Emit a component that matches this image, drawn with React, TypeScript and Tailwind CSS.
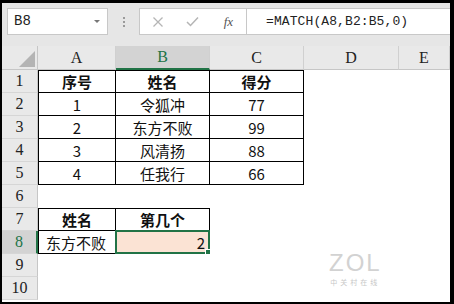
import React from 'react'

const cjk = "font-['Noto_Sans_CJK_SC',sans-serif]"
const serif = "font-['Liberation_Serif','Noto_Sans_CJK_SC',serif]"

type Cell = { text?: string; bold?: boolean; align?: 'left' | 'center' | 'right'; boxed?: boolean; selected?: boolean }

const rows: Cell[][] = [
  [{ text: '序号', bold: true, boxed: true }, { text: '姓名', bold: true, boxed: true }, { text: '得分', bold: true, boxed: true }, {}, {}],
  [{ text: '1', boxed: true }, { text: '令狐冲', boxed: true }, { text: '77', boxed: true }, {}, {}],
  [{ text: '2', boxed: true }, { text: '东方不败', boxed: true }, { text: '99', boxed: true }, {}, {}],
  [{ text: '3', boxed: true }, { text: '风清扬', boxed: true }, { text: '88', boxed: true }, {}, {}],
  [{ text: '4', boxed: true }, { text: '任我行', boxed: true }, { text: '66', boxed: true }, {}, {}],
  [{}, {}, {}, {}, {}],
  [{ text: '姓名', bold: true, boxed: true }, { text: '第几个', bold: true, boxed: true }, {}, {}, {}],
  [{ text: '东方不败', boxed: true, align: 'left' }, { text: '2', boxed: true, align: 'right', selected: true }, {}, {}, {}],
  [{}, {}, {}, {}, {}],
  [{}, {}, {}, {}, {}],
]

const cols = ['A', 'B', 'C', 'D', 'E']

function GridCell({ cell, row, col }: { cell: Cell; row: number; col: number }) {
  // borders only on the two small tables, gridlines are hidden
  const firstRowOfTable = row === 0 || row === 6
  const firstCol = col === 0
  const border = cell.boxed
    ? `border-black border-r border-b ${firstRowOfTable ? 'border-t' : ''} ${firstCol ? 'border-l' : ''}`
    : ''
  const justify = cell.align === 'left' ? 'justify-start pl-[7px]' : cell.align === 'right' ? 'justify-end pr-[4px]' : 'justify-center'
  return (
    <div
      className={`relative flex items-end text-[15px] leading-[20px] text-[#111] ${cjk} ${justify} ${border} ${cell.bold ? 'font-bold' : 'font-normal'} ${cell.selected ? 'bg-[#fbe3d4]' : 'bg-white'}`}
    >
      {cell.text}
      {cell.selected && (
        <>
          <div className="absolute -left-px -top-px right-[-1px] bottom-[-1px] border-2 border-[#217346]" />
          <div className="absolute right-[-3px] bottom-[-3px] w-[5px] h-[5px] bg-[#217346] border border-white box-content" />
        </>
      )}
    </div>
  )
}

export default function App() {
  return (
    <div className="w-[454px] h-[304px] bg-black pl-[2px] pt-[3px] pr-[4px] pb-[2px]">
      <div className="relative w-full h-full flex flex-col bg-[#e8e8e8] overflow-hidden">
        {/* 名称框 + 编辑栏 */}
        <div className="h-[43px] shrink-0 flex items-start pt-[5px] pl-[5px] bg-[#e6e6e6]">
          <div className="w-[101px] h-[27px] bg-white border border-[#c8c8c8] flex items-center justify-between pl-[6px] pr-[7px]">
            <span className="text-[14px] text-[#222] font-['Liberation_Mono',monospace]">B8</span>
            <span className="w-0 h-0 border-l-[3px] border-r-[3px] border-t-[3px] border-l-transparent border-r-transparent border-t-[#777]" />
          </div>
          <div className="w-[31px] h-[27px] flex flex-col items-center justify-center gap-[2px]">
            <span className="w-[2px] h-[2px] bg-[#9a9a9a]" />
            <span className="w-[2px] h-[2px] bg-[#9a9a9a]" />
            <span className="w-[2px] h-[2px] bg-[#9a9a9a]" />
          </div>
          <div className="w-[108px] h-[27px] bg-white border border-[#c8c8c8] flex items-center">
            <span className="w-[36px] flex justify-center">
              <svg width="12" height="12" viewBox="0 0 12 12"><path d="M1.5 1.5l9 9M10.5 1.5l-9 9" stroke="#b5b5b5" strokeWidth="1.3" fill="none" /></svg>
            </span>
            <span className="w-[36px] flex justify-center">
              <svg width="13" height="11" viewBox="0 0 13 11"><path d="M1 6l3.5 3.5L12 1.5" stroke="#b5b5b5" strokeWidth="1.5" fill="none" /></svg>
            </span>
            <span className="w-[36px] flex justify-center text-[13px] italic text-[#555] font-['Liberation_Serif',serif]">fx</span>
          </div>
          <div className="flex-1 h-[27px] bg-white border border-l-0 border-r-0 border-[#c8c8c8] flex items-center pl-[19px]">
            <span className="text-[13px] text-[#222] font-['Liberation_Mono',monospace] tracking-[0.1px]">=MATCH(A8,B2:B5,0)</span>
          </div>
        </div>

        {/* 表格 */}
        <div className="grid grid-cols-[36px_78px_94px_94px_95px_51px] grid-rows-[24px_repeat(10,23px)]">
          <div className="flex items-end justify-end pr-[2px] pb-[2px] bg-[#e9e9e9] border-r border-b border-[#c6c6c6]">
            <div className="w-0 h-0 border-l-[16px] border-b-[16px] border-l-transparent border-b-[#b4b4b4]" />
          </div>
          {cols.map((c) => (
            <div
              key={c}
              className={`flex items-center justify-center text-[16px] ${serif} border-r border-[#d0d0d0] ${
                c === 'B' ? 'bg-[#d3d3d3] text-[#217346] border-b-2 border-b-[#217346]' : 'bg-[#e9e9e9] text-[#222] border-b border-b-[#c6c6c6]'
              }`}
            >
              {c}
            </div>
          ))}
          {rows.map((r, ri) => (
            <React.Fragment key={ri}>
              <div
                className={`flex items-end justify-center pb-[1px] text-[16px] leading-[20px] ${serif} border-b border-[#d6d6d6] ${
                  ri === 7 ? 'bg-[#d3d3d3] text-[#217346] border-r-2 border-r-[#217346]' : 'bg-[#e9e9e9] text-[#222] border-r border-r-[#c6c6c6]'
                }`}
              >
                {ri + 1}
              </div>
              {r.map((cell, ci) => (
                <GridCell key={ci} cell={cell} row={ri} col={ci} />
              ))}
            </React.Fragment>
          ))}
        </div>
        <div className="flex-1 bg-white" />

        {/* 水印 */}
        <div className="absolute left-[327px] top-[246px] flex flex-col items-center">
          <span className="text-[24px] leading-[28px] tracking-[2px] text-[#d2d2d2] font-['Liberation_Sans',sans-serif] font-light">ZOL</span>
          <span className={`text-[7px] leading-[10px] tracking-[3px] text-[#c8c8c8] ${cjk}`}>中关村在线</span>
        </div>
      </div>
    </div>
  )
}
